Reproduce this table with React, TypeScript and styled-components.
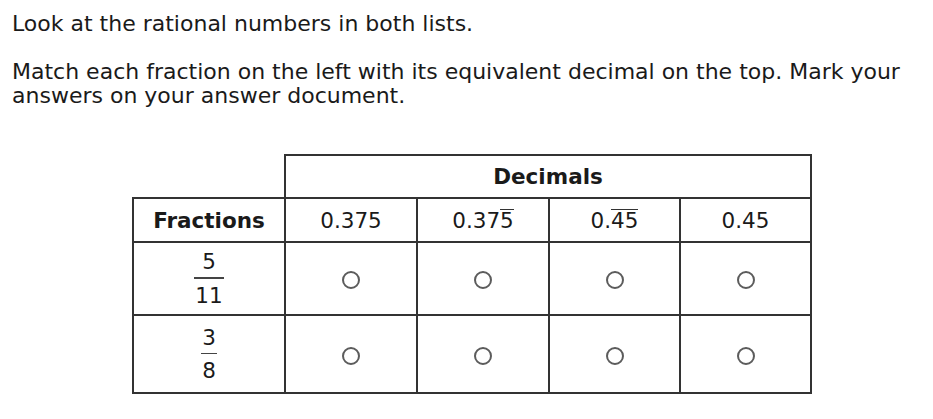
import React from "react";
import styled, { createGlobalStyle } from "styled-components";

const GlobalStyle = createGlobalStyle`
  html, body { margin: 0; padding: 0; background: #ffffff; }
  body {
    font-family: Verdana, "DejaVu Sans", sans-serif;
    color: #1a1a1a;
  }
`;

const Page = styled.div`
  padding: 12px 0 0 12px;
  width: 933px;
  height: 419px;
  box-sizing: border-box;
`;

const Para = styled.p`
  margin: 0 0 24px 0;
  font-size: 22px;
  line-height: 24px;
`;

const Table = styled.table`
  margin: 46px 0 0 120px;
  border-collapse: collapse;
  table-layout: fixed;
  width: 680px;
  font-size: 21.5px;
`;

const Cell = styled.td<{ $h: number; $blank?: boolean; $bold?: boolean }>`
  border: ${(p) => (p.$blank ? "none" : "2px solid #333")};
  height: ${(p) => p.$h}px;
  padding: 0;
  text-align: center;
  vertical-align: middle;
  font-weight: ${(p) => (p.$bold ? 700 : 400)};
  box-sizing: border-box;
`;

const Over = styled.span`
  display: inline-block;
  border-top: 1.5px solid #333;
  padding-top: 2px;
  line-height: 18px;
`;

const Frac = styled.span`
  display: inline-flex;
  flex-direction: column;
  align-items: center;
  vertical-align: middle;
`;

const Num = styled.span`
  line-height: 21px;
  padding: 0 1px;
`;

const Bar = styled.span`
  align-self: stretch;
  height: 1.5px;
  background: #444;
  margin: 5px 0 6px 0;
`;

const Bubble = styled.span`
  display: inline-block;
  width: 18px;
  height: 18px;
  box-sizing: border-box;
  border: 2px solid #5c5c5c;
  border-radius: 50%;
  vertical-align: middle;
`;

const fractions = [
  { n: "5", d: "11", h: 73 },
  { n: "3", d: "8", h: 78 },
];

export default function App() {
  return (
    <Page>
      <GlobalStyle />
      <Para>Look at the rational numbers in both lists.</Para>
      <Para>
        Match each fraction on the left with its equivalent decimal on the top. Mark your
        <br />
        answers on your answer document.
      </Para>
      <Table>
        <colgroup>
          <col style={{ width: 152 }} />
          <col style={{ width: 132 }} />
          <col style={{ width: 132 }} />
          <col style={{ width: 131 }} />
          <col style={{ width: 131 }} />
        </colgroup>
        <tbody>
          <tr>
            <Cell $h={43} $blank />
            <Cell $h={43} $bold colSpan={4}>
              Decimals
            </Cell>
          </tr>
          <tr>
            <Cell $h={44} $bold>Fractions</Cell>
            <Cell $h={44}>0.375</Cell>
            <Cell $h={44}>
              0.37<Over>5</Over>
            </Cell>
            <Cell $h={44}>
              0.<Over>45</Over>
            </Cell>
            <Cell $h={44}>0.45</Cell>
          </tr>
          {fractions.map((f) => (
            <tr key={f.d}>
              <Cell $h={f.h}>
                <Frac>
                  <Num>{f.n}</Num>
                  <Bar />
                  <Num>{f.d}</Num>
                </Frac>
              </Cell>
              {[0, 1, 2, 3].map((i) => (
                <Cell $h={f.h} key={i}>
                  <Bubble />
                </Cell>
              ))}
            </tr>
          ))}
        </tbody>
      </Table>
    </Page>
  );
}
